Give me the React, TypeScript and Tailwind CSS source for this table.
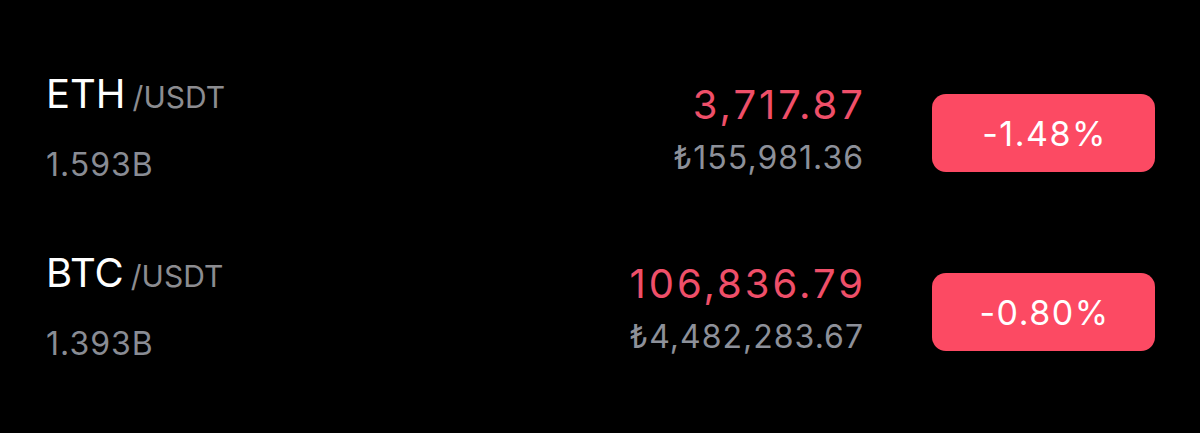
const pairs = [
  { base: 'ETH', quote: '/USDT', vol: '1.593B', price: '3,717.87', fiat: '₺155,981.36', change: '-1.48%' },
  { base: 'BTC', quote: '/USDT', vol: '1.393B', price: '106,836.79', fiat: '₺4,482,283.67', change: '-0.80%' },
];

export default function App() {
  return (
    <div className="w-[1200px] h-[433px] bg-black pt-[44px] pl-[46px] pr-[45px] font-['Inter','Noto_Sans',sans-serif]">
      {pairs.map(p => (
        <div key={p.base} className="flex items-start h-[179px]">
          <div className="flex-1 pt-[30px]">
            <div className="flex items-baseline gap-[7px]">
              <span className="text-[40px] leading-[40px] text-white">{p.base}</span>
              <span className="text-[30px] leading-[40px] text-[#8c8c90]">{p.quote}</span>
            </div>
            <div className="mt-[32px] text-[32px] leading-[32px] text-[#898c94] tracking-[1px]">{p.vol}</div>
          </div>
          <div className="pt-[41px] text-right -mr-[3px]">
            <div className="text-[40px] leading-[40px] text-[#ef4f69] tracking-[3px]">{p.price}</div>
            <div className="mt-[17px] mr-[2px] text-[32px] leading-[32px] text-[#8d9099] tracking-[1px]">{p.fiat}</div>
          </div>
          <div className="ml-[69px] mt-[50px] w-[223px] h-[78px] rounded-[14px] bg-[#fc4a63] flex items-center justify-center pl-[2px]">
            <span className="text-[34px] text-white tracking-[1.5px]">{p.change}</span>
          </div>
        </div>
      ))}
    </div>
  );
}
